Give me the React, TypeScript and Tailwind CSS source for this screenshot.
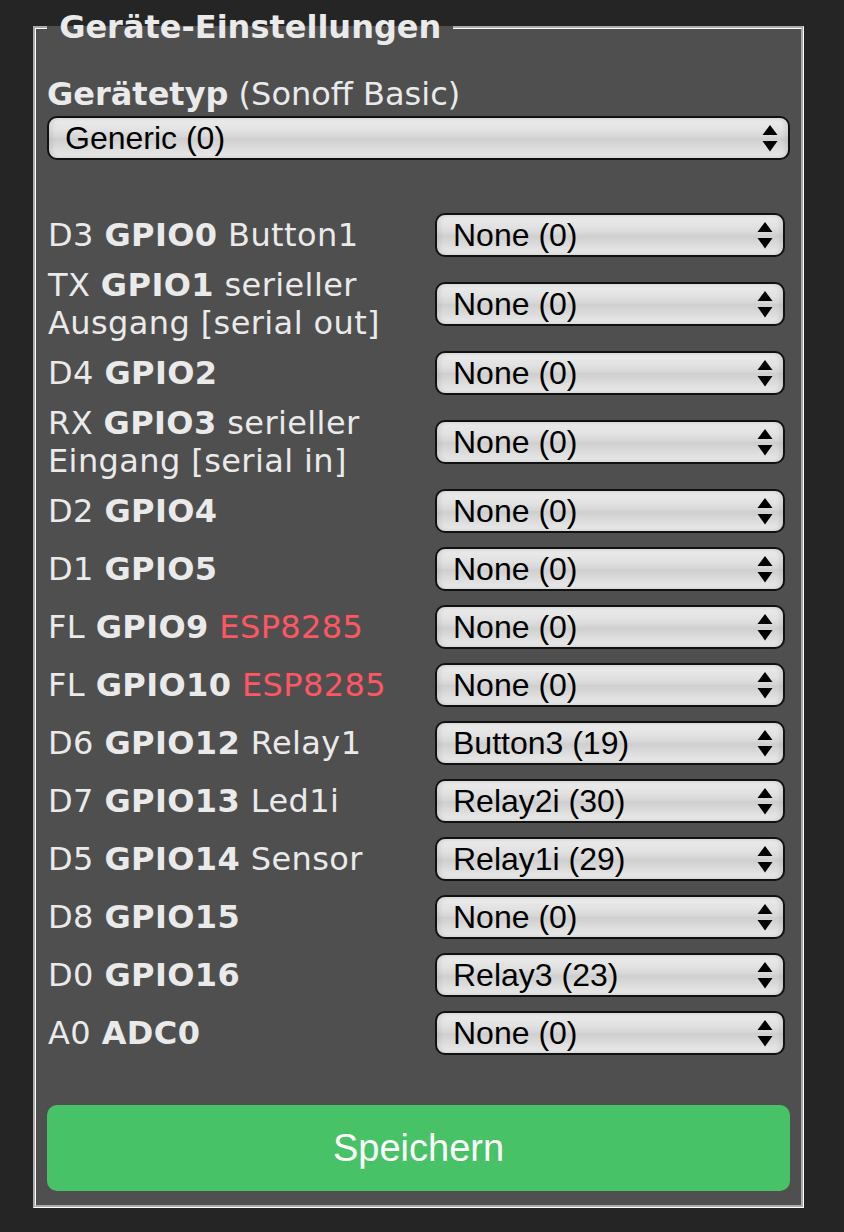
import React from 'react';

type Pin = {
  pre: string;
  gpio: string;
  desc?: string;
  warn?: string;
  value?: string;
};

const pins: Pin[] = [
  { pre: 'D3', gpio: 'GPIO0', desc: 'Button1' },
  { pre: 'TX', gpio: 'GPIO1', desc: 'serieller Ausgang [serial out]' },
  { pre: 'D4', gpio: 'GPIO2' },
  { pre: 'RX', gpio: 'GPIO3', desc: 'serieller Eingang [serial in]' },
  { pre: 'D2', gpio: 'GPIO4' },
  { pre: 'D1', gpio: 'GPIO5' },
  { pre: 'FL', gpio: 'GPIO9', warn: 'ESP8285' },
  { pre: 'FL', gpio: 'GPIO10', warn: 'ESP8285' },
  { pre: 'D6', gpio: 'GPIO12', desc: 'Relay1', value: 'Button3 (19)' },
  { pre: 'D7', gpio: 'GPIO13', desc: 'Led1i', value: 'Relay2i (30)' },
  { pre: 'D5', gpio: 'GPIO14', desc: 'Sensor', value: 'Relay1i (29)' },
  { pre: 'D8', gpio: 'GPIO15' },
  { pre: 'D0', gpio: 'GPIO16', value: 'Relay3 (23)' },
  { pre: 'A0', gpio: 'ADC0' },
];

function Arrows() {
  return (
    <svg width="16" height="27" viewBox="0 0 16 27" className="shrink-0">
      <path d="M8 0 L15.5 10 L0.5 10 Z" fill="#000" />
      <path d="M0.5 16 L15.5 16 L8 26.5 Z" fill="#000" />
    </svg>
  );
}

function FakeSelect({ value, className }: { value: string; className?: string }) {
  return (
    <div
      className={
        'flex h-[44px] items-center justify-between rounded-[10px] border-2 border-[#111] pl-[16px] pr-[10px] text-[32px] leading-none text-black font-["Liberation_Sans",Arial,sans-serif] bg-[linear-gradient(to_bottom,#ececec_0%,#e2e2e2_30%,#d6d6d6_48%,#cfcfcf_52%,#dcdcdc_75%,#ebebeb_100%)] shadow-[inset_3px_0_4px_rgba(0,0,0,0.08),inset_-3px_0_4px_rgba(0,0,0,0.08)] ' +
        (className || '')
      }
    >
      <span>{value}</span>
      <Arrows />
    </div>
  );
}

export default function App() {
  return (
    <div className="min-h-[1232px] w-full bg-[#252525] pl-[33px] pt-[8px] text-[#eaeaea] font-['DejaVu_Sans',Verdana,sans-serif]">
      <fieldset className="w-[771px] border-[3px] [border-style:groove] border-white bg-[#4f4f4f] pl-[11px] pr-[11px] pb-[14px]">
        <legend className="px-[1px] text-[32px] leading-[38px] font-bold">
          &nbsp;Geräte-Einstellungen&nbsp;
        </legend>

        <div className="mt-[29px] text-[32px] leading-[38px]">
          <b>Gerätetyp</b> (Sonoff Basic)
        </div>
        <FakeSelect value="Generic (0)" className="mt-[3px] w-full" />

        <div className="mt-[48px] flex flex-col gap-[4px]">
          {pins.map((p) => (
            <div key={p.gpio} className="flex min-h-[54px] items-center">
              <div className="w-[388px] pl-[1px] text-[32px] leading-[38px] tracking-[0.4px]">
                {p.pre} <b>{p.gpio}</b>
                {p.desc && <> {p.desc}</>}
                {p.warn && <> <span className="text-[#ff5663]">{p.warn}</span></>}
              </div>
              <FakeSelect value={p.value || 'None (0)'} className="w-[350px]" />
            </div>
          ))}
        </div>

        <button className="mt-[45px] h-[86px] w-full rounded-[10px] bg-[#47c266] text-[38px] text-white font-['Liberation_Sans',Arial,sans-serif]">
          Speichern
        </button>
      </fieldset>
    </div>
  );
}
